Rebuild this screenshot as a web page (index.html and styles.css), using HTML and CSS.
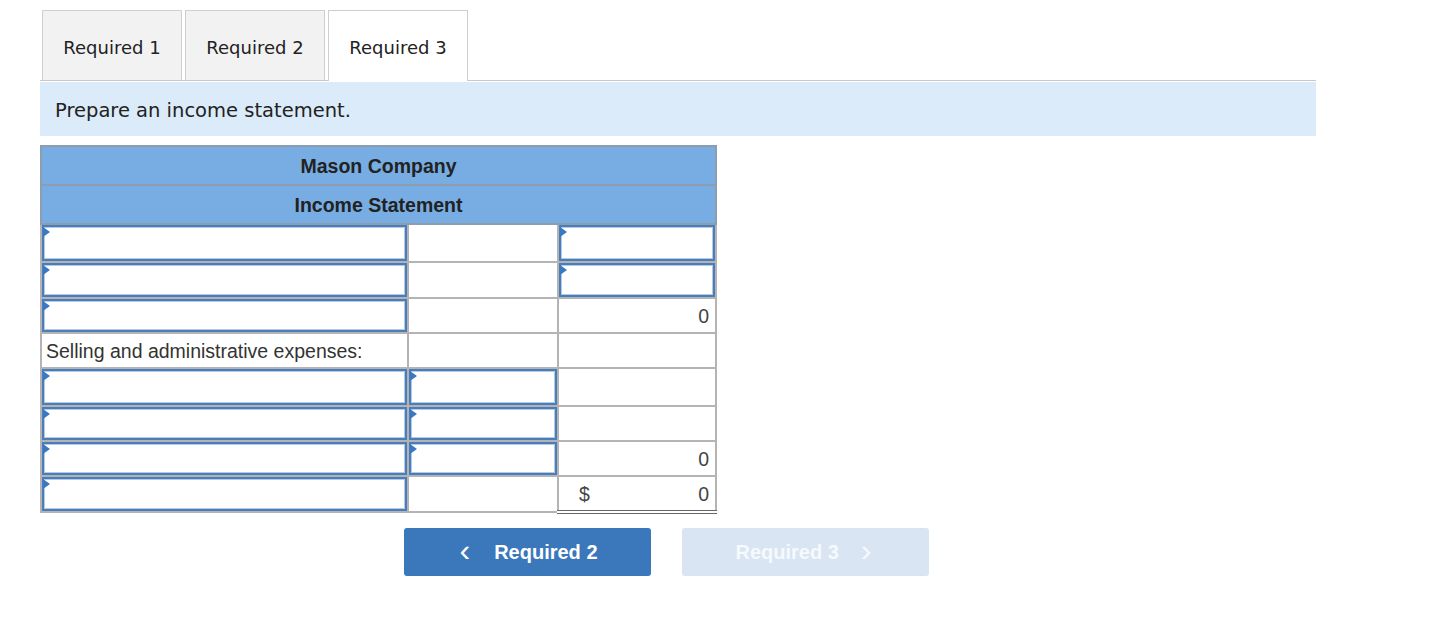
FILE: index.html
```html
<!DOCTYPE html>
<html>
<head>
<meta charset="utf-8">
<link rel="stylesheet" href="styles.css">
</head>
<body>
<div class="page">
  <div class="tabs">
    <div class="tab">Required 1</div>
    <div class="tab">Required 2</div>
    <div class="tab active">Required 3</div>
  </div>
  <div class="instruction">Prepare an income statement.</div>
  <table class="stmt">
    <colgroup><col class="c1"><col class="c2"><col class="c3"></colgroup>
    <tr class="hdr"><th colspan="3">Mason Company</th></tr>
    <tr class="hdr"><th colspan="3">Income Statement</th></tr>
    <tr class="r38"><td class="in"><div class="box"></div></td><td></td><td class="in"><div class="box"></div></td></tr>
    <tr class="r36"><td class="in"><div class="box"></div></td><td></td><td class="in"><div class="box"></div></td></tr>
    <tr class="r35"><td class="in"><div class="box"></div></td><td></td><td class="num top-dark">0</td></tr>
    <tr class="r35"><td class="label">Selling and administrative expenses:</td><td></td><td></td></tr>
    <tr class="r38"><td class="in"><div class="box"></div></td><td class="in"><div class="box"></div></td><td></td></tr>
    <tr class="r35"><td class="in"><div class="box"></div></td><td class="in"><div class="box"></div></td><td></td></tr>
    <tr class="r35"><td class="in"><div class="box"></div></td><td class="in"><div class="box"></div></td><td class="num">0</td></tr>
    <tr class="rlast"><td class="in"><div class="box"></div></td><td></td><td class="num total top-dark"><span class="dollar">$</span>0</td></tr>
  </table>
  <div class="nav">
    <button class="btn prev"><span class="chev">&lsaquo;</span>Required 2</button>
    <button class="btn next disabled">Required 3<span class="chev">&rsaquo;</span></button>
  </div>
</div>
</body>
</html>
```
FILE: styles.css
```css
html, body {
  margin: 0;
  padding: 0;
  background: #fff;
}
.page {
  padding: 10px 0 0 40px;
  width: 1276px;
}
.tabs {
  display: flex;
  gap: 3px;
  padding-left: 2px;
  border-bottom: 1px solid #c8c8c8;
  height: 70px;
}
.tab {
  width: 140px;
  height: 70px;
  box-sizing: border-box;
  border: 1px solid #cfcfcf;
  border-bottom: none;
  background: #f2f2f2;
  font-family: "DejaVu Sans", Verdana, sans-serif;
  font-size: 18px;
  color: #222;
  display: flex;
  align-items: center;
  justify-content: center;
  padding-top: 3px;
}
.tab.active {
  background: #fff;
  height: 71px;
  margin-bottom: -1px;
  position: relative;
}
.instruction {
  margin-top: 1px;
  height: 54px;
  background: #dbebf9;
  font-family: "DejaVu Sans", Verdana, sans-serif;
  font-size: 19.5px;
  color: #222;
  display: flex;
  align-items: center;
  padding-left: 15px;
  padding-top: 2px;
  box-sizing: border-box;
}
.stmt {
  margin-top: 9px;
  border-collapse: collapse;
  width: 677px;
  font-family: "Liberation Sans", Arial, sans-serif;
  font-size: 19.5px;
  line-height: 20px;
  color: #333;
  border-left: 2px solid #aaa;
  border-right: 2px solid #aaa;
  border-top: 2px solid #aaa;
}
.stmt col.c1 { width: 367px; }
.stmt col.c2 { width: 150px; }
.stmt col.c3 { width: 158px; }
.stmt td, .stmt th {
  border: 2px solid #b4b4b4;
  padding: 0;
}
.hdr th {
  background: #77ade3;
  height: 37px;
  font-weight: bold;
  font-size: 19.5px;
  color: #222;
  border-color: #8d9db0;
}
.r38 td { height: 36px; }
.r36 td { height: 34px; }
.r35 td { height: 33px; }
.rlast td { height: 33px; }
.in {
  position: relative;
}
.box {
  position: absolute;
  left: 0;
  top: 0;
  right: 0;
  bottom: 0;
  border: 2px solid #4d7db7;
  box-shadow: inset 0 0 0 1px #aecbed;
  background: #fff;
}
.box::before {
  content: "";
  position: absolute;
  left: -1px;
  top: 0;
  border-left: 7px solid #3a78c4;
  border-top: 5px solid transparent;
  border-bottom: 5px solid transparent;
}
.label {
  padding-left: 4px !important;
  color: #333;
}
.num {
  text-align: right;
  padding-right: 6px !important;
  color: #444;
}
.top-dark {
  border-top: 2px solid #555 !important;
}
.total {
  border-bottom: 4px double #666 !important;
}
.dollar {
  float: left;
  padding-left: 20px;
}
.nav {
  display: flex;
  gap: 31px;
  padding-left: 364px;
  margin-top: 14px;
}
.btn {
  width: 247px;
  height: 48px;
  border: none;
  border-radius: 3px;
  font-family: "Liberation Sans", Arial, sans-serif;
  font-weight: bold;
  font-size: 20px;
  color: #fff;
  display: flex;
  align-items: center;
  justify-content: center;
  padding: 0;
}
.prev {
  background: #3a77bb;
  gap: 24px;
  padding-left: 2px;
}
.next.disabled {
  background: #d9e5f2;
  color: #f6f9fd;
  gap: 22px;
  padding-right: 4px;
}
.chev {
  font-size: 32px;
  font-weight: normal;
  line-height: 1;
  margin-top: -4px;
}
```
